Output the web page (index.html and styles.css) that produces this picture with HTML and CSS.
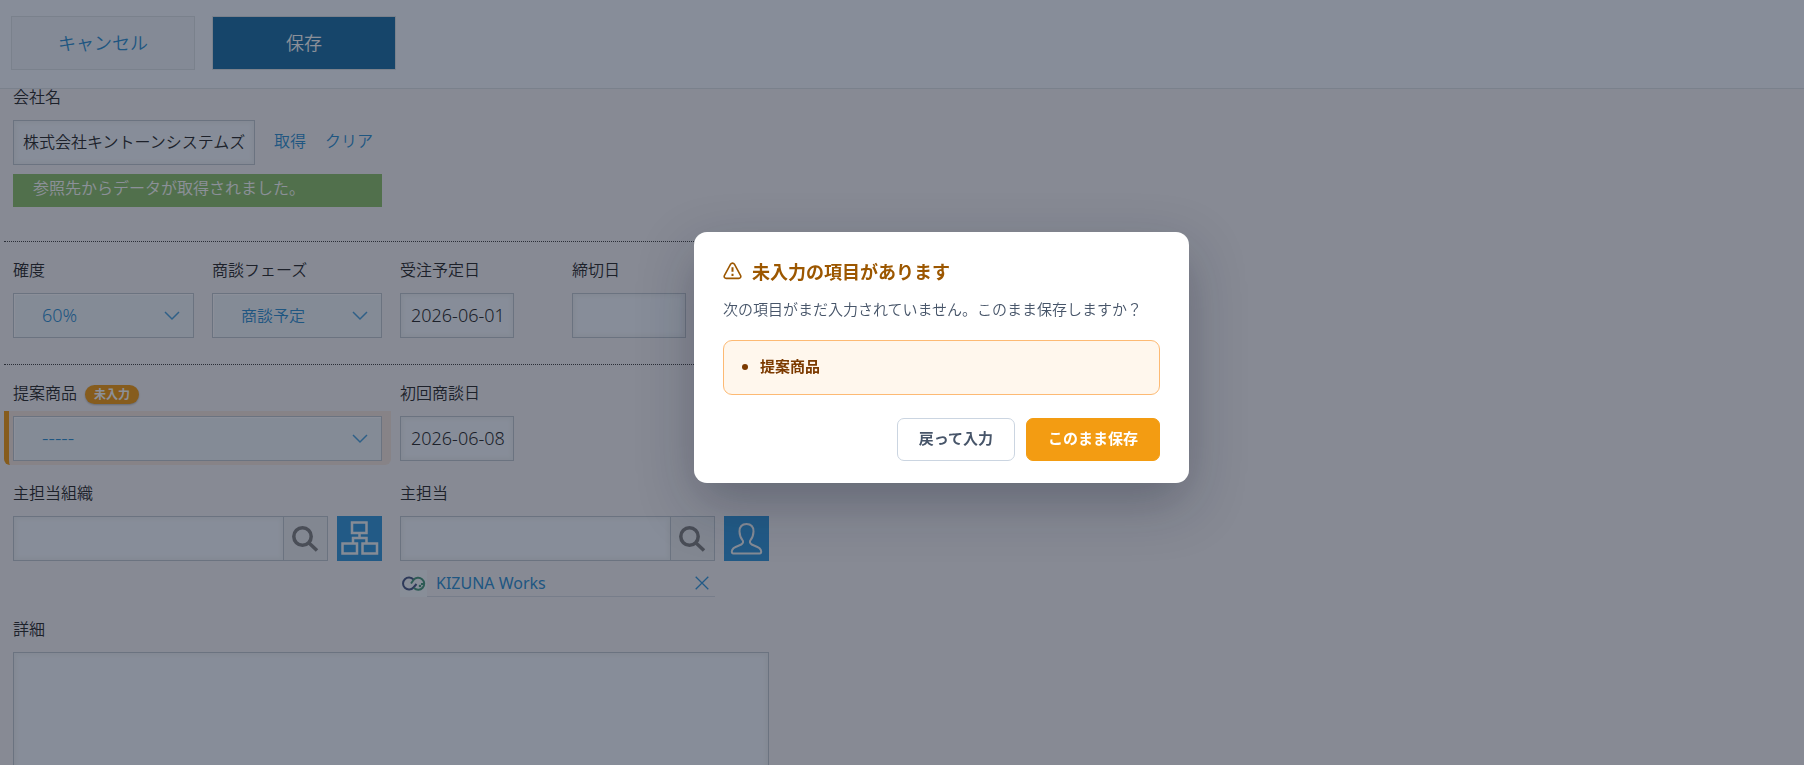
FILE: index.html
```html
<!DOCTYPE html>
<html lang="ja">
<head>
<meta charset="utf-8">
<title>商談の編集</title>
<link rel="stylesheet" href="styles.css">
</head>
<body>
<header class="toolbar">
  <button class="toolbar-button" type="button">キャンセル</button>
  <button class="toolbar-button toolbar-button-primary" type="button">保存</button>
</header>

<main class="form">
  <section class="row">
    <div class="field">
      <label class="label" for="company">会社名</label>
      <div class="lookup">
        <input class="input input-company" id="company" type="text" value="株式会社キントーンシステムズ">
        <a class="link" href="#">取得</a>
        <a class="link" href="#">クリア</a>
      </div>
      <p class="notice">参照先からデータが取得されました。</p>
    </div>
  </section>

  <hr class="divider divider-first">

  <section class="row">
    <div class="field">
      <label class="label" for="rate">確度</label>
      <div class="select-box select-rate">
        <select class="select latin" id="rate"><option>60%</option></select>
        <svg class="chevron" viewBox="0 0 16 10"><path d="M1 1l7 7 7-7"/></svg>
      </div>
    </div>
    <div class="field">
      <label class="label" for="phase">商談フェーズ</label>
      <div class="select-box select-phase">
        <select class="select" id="phase"><option>商談予定</option></select>
        <svg class="chevron" viewBox="0 0 16 10"><path d="M1 1l7 7 7-7"/></svg>
      </div>
    </div>
    <div class="field field-date">
      <label class="label" for="order-date">受注予定日</label>
      <input class="input input-date latin" id="order-date" type="text" value="2026-06-01">
    </div>
    <div class="field">
      <label class="label" for="deadline">締切日</label>
      <input class="input input-date latin" id="deadline" type="text">
    </div>
  </section>

  <hr class="divider">

  <section class="row">
    <div class="field field-half">
      <div class="label-line">
        <label class="label" for="product">提案商品</label>
        <span class="badge">未入力</span>
      </div>
      <div class="missing">
        <div class="select-box">
          <select class="select select-empty" id="product"><option>-----</option></select>
          <svg class="chevron" viewBox="0 0 16 10"><path d="M1 1l7 7 7-7"/></svg>
        </div>
      </div>
    </div>
    <div class="field">
      <label class="label" for="first-date">初回商談日</label>
      <input class="input input-date latin" id="first-date" type="text" value="2026-06-08">
    </div>
  </section>

  <section class="row row-next">
    <div class="field field-half">
      <label class="label" for="org">主担当組織</label>
      <div class="picker">
        <div class="search">
          <input class="input search-input" id="org" type="text">
          <button class="search-button" type="button" aria-label="検索">
            <svg class="search-icon" viewBox="0 0 27 26"><circle cx="10.500" cy="10.500" r="8.700"/><path d="M17 17l8 7.500"/></svg>
          </button>
        </div>
        <button class="picker-button" type="button" aria-label="組織から選択">
          <svg class="picker-icon" viewBox="0 0 45 45"><path d="M15 6.500h14.500v10.500H15zM5.500 27.500h14.500v10H5.500zM25.500 27.500h14.500v10H25.500zM22.500 17v5M16 27v-5h13.500v5"/></svg>
        </button>
      </div>
    </div>
    <div class="field field-user">
      <label class="label" for="owner">主担当</label>
      <div class="picker">
        <div class="search">
          <input class="input search-input" id="owner" type="text">
          <button class="search-button" type="button" aria-label="検索">
            <svg class="search-icon" viewBox="0 0 27 26"><circle cx="10.500" cy="10.500" r="8.700"/><path d="M17 17l8 7.500"/></svg>
          </button>
        </div>
        <button class="picker-button" type="button" aria-label="ユーザーから選択">
          <svg class="picker-icon picker-icon-user" viewBox="0 0 45 45"><path d="M22.500 8c-4.500 0-7 3-7 7.500 0 4 1.500 7 3.500 9.500.5 2-1 3.500-4 4.500-4.500 1.500-7.200 3-7.200 6 0 1.500.5 2 1.500 2h26.400c1 0 1.500-.5 1.500-2 0-3-2.700-4.500-7.200-6-3-1-4.500-2.500-4-4.500 2-2.500 3.500-5.500 3.500-9.500C29.500 11 27 8 22.500 8z"/></svg>
        </button>
      </div>
      <div class="chip">
        <svg class="avatar" viewBox="0 0 27 27"><rect class="avatar-bg" width="27" height="27"/><path class="ring-blue" d="M13.500 9.500a6 6 0 1 0 0 8l3-3.500"/><path class="ring-green" d="M11 13.500l2.500-3.500a6 6 0 1 1 .5 8M24.500 14h-3.500"/><circle class="dot-green" cx="20" cy="16" r="1.300"/></svg>
        <div class="chip-body">
          <a class="chip-name" href="#">KIZUNA Works</a>
          <button class="chip-remove" type="button" aria-label="削除"><svg class="remove-icon" viewBox="0 0 14 14"><path d="M.7.7l12.600 12.600M13.300.7L.7 13.300"/></svg></button>
        </div>
      </div>
    </div>
  </section>

  <section class="row row-next">
    <div class="field field-wide">
      <label class="label" for="detail">詳細</label>
      <textarea class="input textarea" id="detail"></textarea>
    </div>
  </section>
</main>

<div class="overlay">
  <div class="dialog" role="dialog" aria-labelledby="dialog-title">
    <div class="dialog-head">
      <svg class="warn-icon" viewBox="0 0 19 18"><path d="M7.600 2.200c.9-1.500 2.900-1.500 3.800 0l6.100 11.200c.8 1.400-.1 3-1.700 3H3.200c-1.600 0-2.500-1.600-1.700-3z"/><path class="warn-mark" d="M9.500 5.200v4.600M9.500 11.800v2.300"/></svg>
      <h2 class="dialog-title" id="dialog-title">未入力の項目があります</h2>
    </div>
    <p class="dialog-text">次の項目がまだ入力されていません。このまま保存しますか？</p>
    <ul class="missing-list"><li>提案商品</li></ul>
    <div class="dialog-actions">
      <button class="dialog-button" type="button">戻って入力</button>
      <button class="dialog-button dialog-button-primary" type="button">このまま保存</button>
    </div>
  </div>
</div>
</body>
</html>
```
FILE: styles.css
```css
* {
  box-sizing: border-box;
}

body {
  margin: 0;
  height: 100vh;
  overflow: hidden;
  background: #f6f4f6;
  color: #2b2b2b;
  font: 350 16px/16px "Noto Sans CJK JP", sans-serif;
}

button,
input,
select,
textarea {
  margin: 0;
  font: inherit;
  color: inherit;
}

a {
  color: #2e90d2;
  text-decoration: none;
}

.toolbar {
  display: flex;
  gap: 17px;
  padding: 16px 11px 18px;
  border-bottom: 1px solid #dde2e6;
  background: #f6faff;
}

.toolbar-button {
  width: 184px;
  height: 54px;
  padding: 0 0 3px;
  border: 1px solid #dde2e6;
  background: #f0f4f9;
  color: #2e90d2;
  font-size: 18px;
}

.toolbar-button-primary {
  background: #1d6fa5;
  color: #fff;
}

.form {
  padding: 0 4px;
}

.row {
  display: flex;
  padding: 0 9px;
  gap: 18px;
}

.row-next {
  margin-top: 24px;
}

.field {
  display: flex;
  flex-direction: column;
}

.field-half {
  width: 369px;
}

.field-date {
  width: 154px;
}

.field-user {
  width: 369px;
}

.field-wide {
  width: 756px;
}

.label {
  margin-bottom: 17px;
  line-height: 14px;
}

.label-line {
  display: flex;
  align-items: flex-start;
  gap: 8px;
  height: 31px;
}

.badge {
  padding: 0 9px 1px;
  border-radius: 10px;
  background: #f39c12;
  box-shadow: 0 1px 2px rgba(0, 0, 0, .25);
  color: #fff;
  font-size: 12px;
  font-weight: 700;
  line-height: 18px;
}

.divider {
  width: 1000px;
  max-width: 100%;
  margin: 26px 0 20px;
  border: 0;
  border-top: 1px dotted #444;
}

.divider-first {
  margin-top: 34px;
}

.input {
  height: 45px;
  padding: 0 8px 4px 9px;
  border: 1px solid #c0c8d0;
  border-radius: 0;
  background: #f6faff;
  box-shadow: 2px 2px 4px #ecf0f3 inset, -2px -2px 4px #ecf0f3 inset;
}

.latin {
  font-family: "Noto Sans", "Noto Sans CJK JP", sans-serif;
  font-size: 18px;
}

.input-company {
  width: 242px;
}

.input-date {
  width: 114px;
  padding: 0 8px 2px 10px;
}

.lookup {
  display: flex;
  align-items: center;
}

.link {
  margin-left: 19px;
  padding-bottom: 5px;
}

.notice {
  width: 369px;
  height: 33px;
  margin: 9px 0 0;
  padding: 5px 20px;
  background: #8fc26c;
  color: #fff;
}

.select-box {
  position: relative;
}

.select-rate {
  width: 181px;
}

.select-phase {
  width: 170px;
}

.select {
  display: block;
  width: 100%;
  height: 45px;
  padding: 0 40px 2px 28px;
  border: 1px solid #c0c8d0;
  border-radius: 0;
  appearance: none;
  background: #f0f5fa;
  box-shadow: 1px 1px 1px #fff inset;
  color: #2e90d2;
}

.select-empty {
  font-family: "Noto Sans", sans-serif;
  font-size: 20px;
}

.chevron {
  position: absolute;
  top: 18px;
  right: 14px;
  width: 16px;
  height: 10px;
  fill: none;
  stroke: #4da3dd;
  stroke-width: 1.500;
  pointer-events: none;
}

.missing {
  margin: -5px -9px -4px;
  padding: 5px 9px 4px 4px;
  border-left: 5px solid #f39c12;
  border-radius: 0 0 6px 6px;
  background: #f5e6dc;
}

.picker {
  display: flex;
  gap: 9px;
}

.search {
  display: flex;
  flex: 1;
}

.search-input {
  flex: 1;
  min-width: 0;
}

.search-button {
  width: 45px;
  height: 45px;
  margin-left: -1px;
  padding: 0;
  border: 1px solid #c0c8d0;
  background: #ebedf0;
}

.search-icon {
  display: block;
  width: 27px;
  height: 26px;
  margin: 0 8px;
  fill: none;
  stroke: #808080;
  stroke-width: 3.500;
}

.picker-button {
  width: 45px;
  height: 45px;
  padding: 0;
  border: 0;
  background: #3498db;
}

.picker-icon {
  display: block;
  width: 45px;
  height: 45px;
  fill: none;
  stroke: #f2f5f8;
  stroke-width: 2.500;
}

.picker-icon-user {
  stroke-width: 2;
}

.chip {
  display: flex;
  width: 315px;
  height: 27px;
  margin-top: 9px;
}

.avatar {
  width: 27px;
  height: 27px;
  fill: none;
  stroke-width: 2;
}

.avatar-bg {
  fill: #f7fbfe;
}

.ring-blue {
  stroke: #4a5a86;
}

.ring-green {
  stroke: #4a9a7c;
}

.dot-green {
  fill: #4a9a7c;
}

.chip-body {
  display: flex;
  flex: 1;
  justify-content: space-between;
  align-items: center;
  padding: 0 6px 1px 9px;
  border-bottom: 1px solid #d6dae2;
}

.chip-name {
  font-family: "Noto Sans", sans-serif;
  font-weight: 400;
}

.chip-remove {
  padding: 0;
  border: 0;
  background: none;
}

.remove-icon {
  display: block;
  width: 14px;
  height: 14px;
  stroke: #3498db;
  stroke-width: 1.300;
}

.textarea {
  width: 100%;
  height: 150px;
  resize: none;
}

.overlay {
  position: fixed;
  inset: 0;
  display: flex;
  justify-content: center;
  align-items: center;
  padding: 0 0 50px 79px;
  background: rgba(15, 23, 42, .48);
}

.dialog {
  width: 495px;
  padding: 27px 29px 22px;
  border-radius: 13px;
  background: #fff;
  box-shadow: 0 20px 56px rgba(15, 23, 42, .3);
}

.dialog-head {
  display: flex;
  align-items: center;
  gap: 10px;
}

.warn-icon {
  width: 19px;
  height: 18px;
  fill: none;
  stroke: #9c5700;
  stroke-width: 1.600;
}

.warn-mark {
  stroke-width: 2;
}

.dialog-title {
  margin: 0;
  color: #9c5700;
  font-size: 18px;
  font-weight: 700;
  line-height: 24px;
}

.dialog-text {
  margin: 13px 0 18px;
  color: #475569;
  font-size: 15px;
  line-height: 26px;
}

.missing-list {
  margin: 0 0 23px;
  padding: 12px 18px 15px 36px;
  border: 1px solid #fdba74;
  border-radius: 9px;
  background: #fff7ed;
  color: #7c3a00;
  font-size: 15px;
  font-weight: 700;
  line-height: 26px;
}

.dialog-actions {
  display: flex;
  justify-content: flex-end;
  gap: 11px;
}

.dialog-button {
  height: 43px;
  padding: 0 21px 4px;
  border: 1px solid #cbd5e1;
  border-radius: 7px;
  background: #fff;
  color: #475569;
  font-size: 15px;
  font-weight: 700;
}

.dialog-button-primary {
  border-color: #f39c12;
  background: #f39c12;
  color: #fff;
}
```
